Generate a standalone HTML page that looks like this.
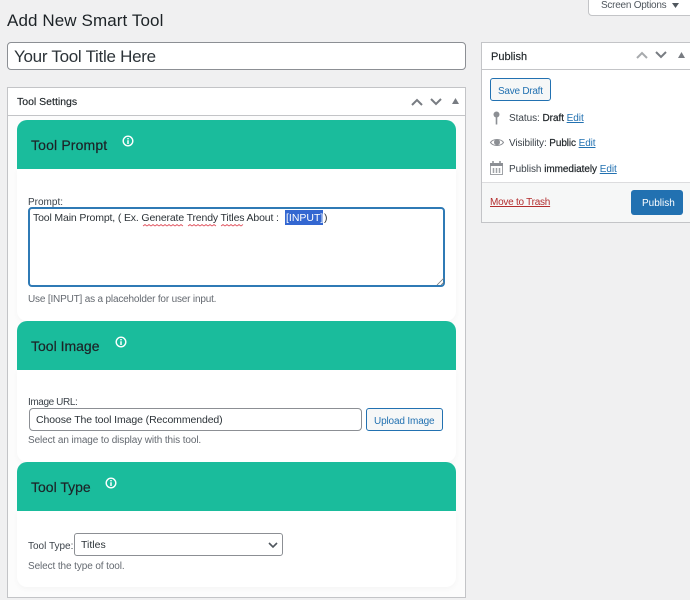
<!DOCTYPE html>
<html><head><meta charset="utf-8"><style>
html,body{margin:0;padding:0;width:690px;height:600px;overflow:hidden;background:#f0f0f1;}
body{position:relative;font-family:"Liberation Sans",sans-serif;color:#1d2327;}
.b{position:absolute;box-sizing:border-box;}
.t{position:absolute;white-space:nowrap;font-size:10px;line-height:14px;color:#3c434a;}
a{color:#2271b1;text-decoration:underline;}
.teal{position:absolute;left:17px;width:439px;height:49px;background:#1abc9c;border-radius:10px 10px 0 0;}
.card{position:absolute;left:17px;width:439px;background:#fff;border-radius:0 0 10px 10px;box-shadow:0 2px 6px rgba(0,0,0,.03);}
.h{position:absolute;white-space:nowrap;font-size:14px;line-height:18px;color:#1d2327;-webkit-text-stroke:.2px #1d2327;}
svg{position:absolute;display:block;overflow:visible;}
</style></head><body>

<div class="b" style="left:588px;top:-4px;width:110px;height:20px;background:#fff;border:1px solid #c3c4c7;border-radius:0 0 4px 4px;"></div>
<div class="t" style="left:601px;top:-1px;color:#50575e;letter-spacing:-.25px;">Screen Options</div>
<svg style="left:672px;top:3px" width="7" height="5"><path d="M0 0H7L3.5 5Z" fill="#50575e"/></svg>

<div class="t" style="left:7px;top:10px;font-size:17px;line-height:22px;color:#1d2327;letter-spacing:.1px;">Add New Smart Tool</div>

<div class="b" style="left:7px;top:42px;width:459px;height:28px;background:#fff;border:1px solid #8c8f94;border-radius:4px;"></div>
<div class="t" style="left:14px;top:46px;font-size:17px;line-height:22px;color:#2c3338;letter-spacing:-.28px;">Your Tool Title Here</div>

<div class="b" style="left:7px;top:87px;width:459px;height:511px;background:#fff;border:1px solid #c3c4c7;"></div>
<div class="b" style="left:8px;top:115px;width:457px;height:1px;background:#c3c4c7;"></div>
<div class="b" style="left:8px;top:116px;width:457px;height:481px;background:#fcfcfc;"></div>
<div class="t" style="left:17px;top:95px;font-size:10.5px;color:#1d2327;-webkit-text-stroke:.15px #1d2327;">Tool Settings</div>
<svg style="left:411px;top:98px" width="12" height="8" fill="none" stroke="#787c82" stroke-width="2"><path d="M1 7L6 2L11 7"/></svg>
<svg style="left:430px;top:98px" width="12" height="8" fill="none" stroke="#787c82" stroke-width="2"><path d="M1 1L6 6L11 1"/></svg>
<svg style="left:452px;top:98px" width="8" height="6"><path d="M0 6H7L3.5 0Z" fill="#787c82"/></svg>

<div class="card" style="top:169px;height:152px;"></div>
<div class="teal" style="top:120px;"></div>
<div class="h" style="left:31px;top:136px;letter-spacing:.15px;">Tool Prompt</div>
<svg style="left:122px;top:135px" width="12" height="12"><circle cx="6" cy="6" r="4.8" fill="none" stroke="#fff" stroke-width="1.4"/><path d="M6 5.3V9M6 3V4.4" stroke="#fff" stroke-width="1.5"/></svg>
<div class="t" style="left:28px;top:196px;">Prompt:</div>
<div class="b" style="left:28px;top:207px;width:417px;height:80px;background:#fff;border:2px solid #2f7ab5;border-radius:4px;"></div>
<div class="b" style="left:285px;top:210px;width:38px;height:15px;background:#3367d1;"></div>
<div class="t" style="left:33px;top:211px;color:#2c3338;font-size:10.5px;letter-spacing:-.15px;">Tool Main Prompt, ( Ex. Generate Trendy Titles About :</div>
<div class="t" style="left:286px;top:211px;color:#fff;font-size:10.5px;">[INPUT]</div>
<div class="t" style="left:324px;top:211px;color:#2c3338;font-size:10.5px;">)</div>
<svg style="left:143px;top:224px" width="103" height="4" fill="none" stroke="#e0525e" stroke-width=".8"><path d="M0 2l2-1.5 2 1.5 2-1.5 2 1.5 2-1.5 2 1.5 2-1.5 2 1.5 2-1.5 2 1.5 2-1.5 2 1.5 2-1.5 2 1.5 2-1.5 2 1.5 2-1.5 2 1.5 2-1.5 2 1.5M45 2l2-1.5 2 1.5 2-1.5 2 1.5 2-1.5 2 1.5 2-1.5 2 1.5 2-1.5 2 1.5 2-1.5 2 1.5 2-1.5 2 1.5M78 2l2-1.5 2 1.5 2-1.5 2 1.5 2-1.5 2 1.5 2-1.5 2 1.5 2-1.5 2 1.5 2-1.5"/></svg>
<svg style="left:436px;top:277px" width="8" height="8" stroke="#777" stroke-width=".8"><path d="M1 8L8 1M5 8L8 5"/></svg>
<div class="t" style="left:28px;top:293px;color:#646970;letter-spacing:-.18px;">Use [INPUT] as a placeholder for user input.</div>

<div class="card" style="top:370px;height:92px;"></div>
<div class="teal" style="top:321px;"></div>
<div class="h" style="left:31px;top:337px;">Tool Image</div>
<svg style="left:115px;top:336px" width="12" height="12"><circle cx="6" cy="6" r="4.8" fill="none" stroke="#fff" stroke-width="1.4"/><path d="M6 5.3V9M6 3V4.4" stroke="#fff" stroke-width="1.5"/></svg>
<div class="t" style="left:28px;top:396px;letter-spacing:-.4px;">Image URL:</div>
<div class="b" style="left:29px;top:408px;width:333px;height:23px;background:#fff;border:1px solid #8c8f94;border-radius:4px;"></div>
<div class="t" style="left:36px;top:413px;color:#2c3338;font-size:10.5px;letter-spacing:-.1px;">Choose The tool Image (Recommended)</div>
<div class="b" style="left:366px;top:408px;width:77px;height:23px;background:#f6f7f7;border:1px solid #2271b1;border-radius:3px;"></div>
<div class="t" style="left:374px;top:415px;color:#2271b1;letter-spacing:-.15px;">Upload Image</div>
<div class="t" style="left:28px;top:434px;color:#646970;letter-spacing:-.1px;">Select an image to display with this tool.</div>

<div class="card" style="top:511px;height:76px;"></div>
<div class="teal" style="top:462px;"></div>
<div class="h" style="left:31px;top:478px;">Tool Type</div>
<svg style="left:105px;top:477px" width="12" height="12"><circle cx="6" cy="6" r="4.8" fill="none" stroke="#fff" stroke-width="1.4"/><path d="M6 5.3V9M6 3V4.4" stroke="#fff" stroke-width="1.5"/></svg>
<div class="t" style="left:28px;top:540px;">Tool Type:</div>
<div class="b" style="left:74px;top:533px;width:209px;height:23px;background:#fff;border:1px solid #8c8f94;border-radius:3px;"></div>
<div class="t" style="left:81px;top:538px;color:#2c3338;font-size:10.5px;">Titles</div>
<svg style="left:268px;top:542px" width="10" height="6" fill="none" stroke="#50575e" stroke-width="1.6"><path d="M1 1L5 5L9 1"/></svg>
<div class="t" style="left:28px;top:560px;color:#646970;letter-spacing:-.1px;">Select the type of tool.</div>

<div class="b" style="left:481px;top:42px;width:215px;height:181px;background:#fff;border:1px solid #c3c4c7;"></div>
<div class="b" style="left:482px;top:69px;width:210px;height:1px;background:#c3c4c7;"></div>
<div class="t" style="left:491px;top:50px;font-size:11px;color:#1d2327;-webkit-text-stroke:.15px #1d2327;">Publish</div>
<svg style="left:636px;top:51px" width="12" height="8" fill="none" stroke="#a7aaad" stroke-width="2"><path d="M1 7L6 2L11 7"/></svg>
<svg style="left:655px;top:51px" width="12" height="8" fill="none" stroke="#787c82" stroke-width="2"><path d="M1 1L6 6L11 1"/></svg>
<svg style="left:678px;top:52px" width="7" height="6"><path d="M0 6H7L3.5 0Z" fill="#787c82"/></svg>

<div class="b" style="left:490px;top:78px;width:61px;height:23px;background:#f6f7f7;border:1px solid #2271b1;border-radius:3px;"></div>
<div class="t" style="left:498px;top:85px;color:#2271b1;letter-spacing:-.25px;">Save Draft</div>

<svg style="left:492px;top:111px" width="9" height="14"><circle cx="4.5" cy="3.5" r="3" fill="#8c8f94"/><path d="M4.5 5V13.5" stroke="#8c8f94" stroke-width="1.6"/></svg>
<div class="t" style="left:509px;top:112px;letter-spacing:-.05px;">Status: <span style="color:#1d2327;-webkit-text-stroke:.2px #1d2327">Draft</span> <a>Edit</a></div>
<svg style="left:490px;top:137px" width="14" height="11"><path d="M.5 5.5C3 1.5 11 1.5 13.500 5.500C11 9.500 3 9.500 .5 5.500Z" fill="none" stroke="#8c8f94" stroke-width="1.1"/><circle cx="7" cy="5.300" r="3" fill="#8c8f94"/></svg>
<div class="t" style="left:509px;top:137px;letter-spacing:-.1px;">Visibility: <span style="color:#1d2327;-webkit-text-stroke:.2px #1d2327">Public</span> <a>Edit</a></div>
<svg style="left:490px;top:161px" width="13" height="14"><rect x=".5" y="2.500" width="12" height="11" fill="none" stroke="#a0a3a7"/><rect x="0" y="2" width="13" height="3" fill="#8c8f94"/><path d="M3 0V3M10 0V3" stroke="#8c8f94" stroke-width="1.500"/><path d="M3.500 7V12M6.500 7V12M9.500 7V12" stroke="#a0a3a7" stroke-width="1.500"/></svg>
<div class="t" style="left:509px;top:163px;letter-spacing:-.05px;">Publish <span style="color:#1d2327;-webkit-text-stroke:.2px #1d2327">immediately</span> <a>Edit</a></div>

<div class="b" style="left:482px;top:182px;width:210px;height:40px;background:#f6f7f7;border-top:1px solid #dcdcde;"></div>
<div class="t" style="left:490px;top:196px;color:#b32d2e;text-decoration:underline;letter-spacing:-.25px;">Move to Trash</div>
<div class="b" style="left:631px;top:190px;width:52px;height:25px;background:#2271b1;border-radius:3px;"></div>
<div class="t" style="left:642px;top:197px;color:#fff;">Publish</div>

</body></html>
